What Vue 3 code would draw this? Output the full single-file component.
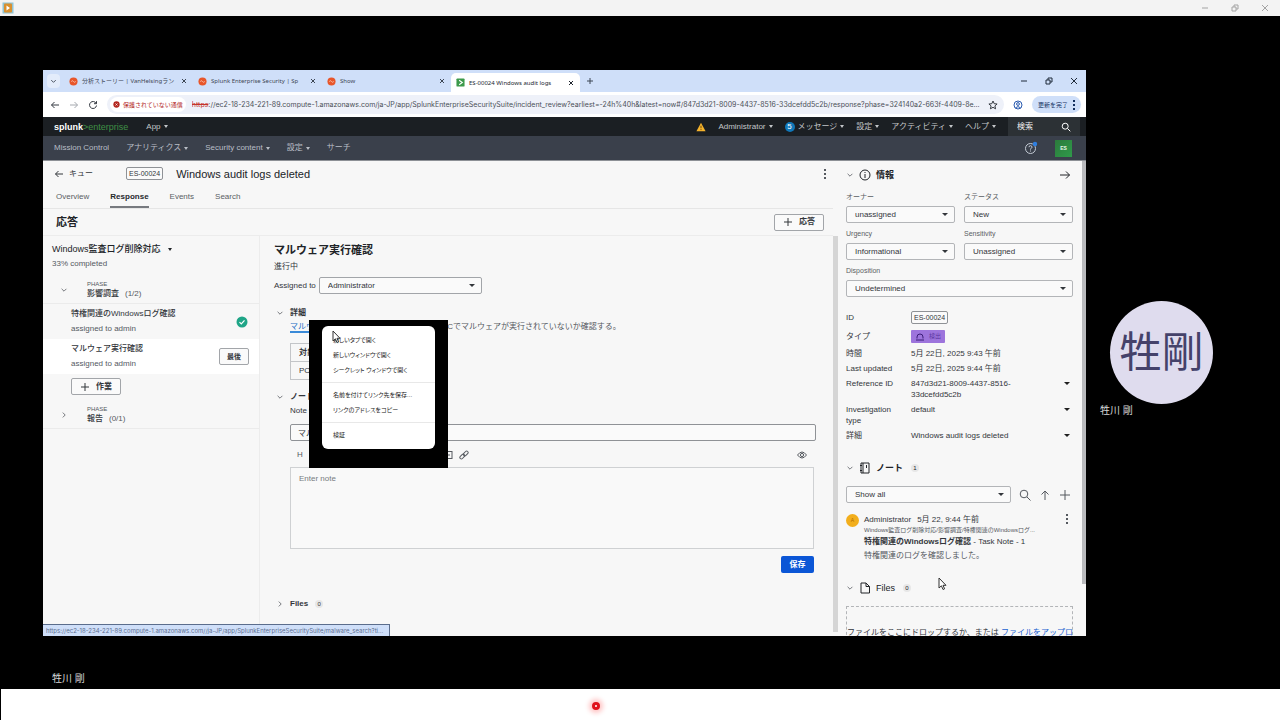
<template>
  <div class="viewer">
    <header class="titlebar">
      <svg class="app-icon" viewBox="0 0 12 12" aria-hidden="true">
        <rect x="0.5" y="0.5" width="11" height="11" fill="#8fc4d6" />
        <rect x="2" y="1.5" width="8" height="9" rx="1" fill="#d9902f" />
        <path d="M4.5 3.5v5l3.5-2.5z" fill="#fff" />
      </svg>
      <div class="window-buttons pale">
        <button type="button" aria-label="最小化">
          <svg viewBox="0 0 10 10"><path d="M2 5h6" /></svg>
        </button>
        <button type="button" aria-label="元に戻す">
          <svg viewBox="0 0 10 10"><path d="M2 4h4v4H2zM4 4V2h4v4H6" /></svg>
        </button>
        <button type="button" aria-label="閉じる">
          <svg viewBox="0 0 10 10"><path d="M2 2l6 6M8 2l-6 6" /></svg>
        </button>
      </div>
    </header>

    <div class="stage">
      <div class="share">
        <div class="browser">
          <!-- タブ -->
          <div class="tabstrip">
            <button type="button" class="tab-search" aria-label="タブを検索">
              <svg class="stroke" viewBox="0 0 10 10"><path d="M2.5 4l2.5 2.5L7.5 4" /></svg>
            </button>
            <div v-for="tab in tabs" :key="tab.title" class="tab" :class="{ active: tab.active }">
              <svg class="favicon" viewBox="0 0 10 10" aria-hidden="true">
                <template v-if="tab.active">
                  <rect x="0.5" y="0.5" width="9" height="9" rx="1" fill="#3c9a4b" />
                  <path d="M3.5 2.5L7 5 3.5 7.5" fill="none" stroke="#fff" stroke-width="1.2" />
                </template>
                <template v-else>
                  <circle cx="5" cy="5" r="4.5" fill="#e8562a" />
                  <path d="M2.5 5q1.2-1.8 2.5 0t2.5 0" fill="none" stroke="#f7c3ae" />
                </template>
              </svg>
              <span class="tab-title">{{ tab.title }}</span>
              <button type="button" class="tab-close" aria-label="タブを閉じる">
                <svg class="stroke" viewBox="0 0 10 10"><path d="M3 3l4 4M7 3L3 7" /></svg>
              </button>
            </div>
            <button type="button" class="new-tab" aria-label="新しいタブ">
              <svg class="stroke" viewBox="0 0 10 10"><path d="M5 2v6M2 5h6" /></svg>
            </button>
            <div class="window-buttons">
              <button type="button" aria-label="最小化">
                <svg viewBox="0 0 10 10"><path d="M2 5h6" /></svg>
              </button>
              <button type="button" aria-label="元に戻す">
                <svg viewBox="0 0 10 10"><path d="M2 4h4v4H2zM4 4V2h4v4H6" /></svg>
              </button>
              <button type="button" aria-label="閉じる">
                <svg viewBox="0 0 10 10"><path d="M2 2l6 6M8 2l-6 6" /></svg>
              </button>
            </div>
          </div>

          <!-- アドレスバー -->
          <div class="toolbar">
            <button type="button" aria-label="戻る">
              <svg class="stroke" viewBox="0 0 10 10"><path d="M9 5H1.5M4.5 2L1.5 5l3 3" /></svg>
            </button>
            <button type="button" class="dim" aria-label="進む">
              <svg class="stroke" viewBox="0 0 10 10"><path d="M1 5h7.5M5.5 2l3 3-3 3" /></svg>
            </button>
            <button type="button" aria-label="再読み込み">
              <svg class="stroke" viewBox="0 0 10 10"><path d="M8.2 3.5A3.5 3.5 0 1 0 8.5 5.5M8.5 1.2v2.5H6" /></svg>
            </button>
            <div class="omnibox">
              <span class="insecure">
                <svg viewBox="0 0 10 10" aria-hidden="true">
                  <circle cx="5" cy="5" r="4.5" fill="#b3261e" />
                  <path d="M3.5 3.5l3 3M6.5 3.5l-3 3" stroke="#fff" />
                </svg>
                保護されていない通信
              </span>
              <span class="url"><s>https</s>{{ pageUrl }}</span>
              <svg class="stroke star" viewBox="0 0 10 10" aria-hidden="true">
                <path d="M5 1l1.2 2.7 2.9.3-2.2 1.9.7 2.9L5 7.3 2.4 8.8l.7-2.9L.9 4l2.9-.3z" />
              </svg>
            </div>
            <svg class="stroke profile" viewBox="0 0 10 10" aria-hidden="true">
              <circle cx="5" cy="5" r="4" />
              <circle cx="5" cy="4" r="1.4" />
              <path d="M2.5 7.8q2.5-2.4 5 0" />
            </svg>
            <button type="button" class="update">
              更新を完了
              <span class="kebab"></span>
            </button>
          </div>

          <!-- Splunk バー -->
          <nav class="splunk-bar" aria-label="Splunk">
            <a class="brand" href="#"><b>splunk</b><span>&gt;enterprise</span></a>
            <a class="menu" href="#">App<i class="caret"></i></a>
            <span class="spacer"></span>
            <svg class="warn" viewBox="0 0 12 12" aria-hidden="true">
              <path d="M6 1l5.5 10H.5z" fill="#f5b32c" />
              <path d="M6 4.5v3M6 8.5v1.2" stroke="#5a3a00" />
            </svg>
            <a class="menu" href="#">Administrator<i class="caret"></i></a>
            <a class="menu" href="#"><em>5</em>メッセージ<i class="caret"></i></a>
            <a class="menu" href="#">設定<i class="caret"></i></a>
            <a class="menu" href="#">アクティビティ<i class="caret"></i></a>
            <a class="menu" href="#">ヘルプ<i class="caret"></i></a>
            <label class="find">
              <input type="text" placeholder="検索" aria-label="検索" />
              <svg class="stroke" viewBox="0 0 10 10"><circle cx="4.2" cy="4.2" r="3" /><path d="M6.5 6.5L9.3 9.3" /></svg>
            </label>
          </nav>

          <nav class="app-nav" aria-label="アプリ">
            <a v-for="item in appMenu" :key="item.label" class="menu" href="#">
              {{ item.label }}<i v-if="item.caret" class="caret"></i>
            </a>
            <span class="spacer"></span>
            <svg class="help" viewBox="0 0 14 14" aria-hidden="true">
              <circle cx="6.5" cy="7.5" r="5" fill="none" stroke="#c5ccd6" />
              <path d="M5 6.2q0-1.5 1.5-1.5T8 6.2q0 1-1.5 1.6v.8M6.5 9.5v1" fill="none" stroke="#c5ccd6" />
              <circle cx="11" cy="3" r="2.2" fill="#2f7fe0" />
            </svg>
            <span class="es-logo">ES</span>
          </nav>

          <div class="page">
            <main class="main">
              <div class="incident-head">
                <a class="back" href="#">
                  <svg class="stroke" viewBox="0 0 10 10"><path d="M9 5H1.5M4.5 2L1.5 5l3 3" /></svg>
                  キュー
                </a>
                <span class="chip">ES-00024</span>
                <h1>Windows audit logs deleted</h1>
                <button type="button" class="plain" aria-label="メニュー"><span class="kebab"></span></button>
              </div>
              <div class="page-tabs" role="tablist">
                <button
                  v-for="name in pageTabs"
                  :key="name"
                  type="button"
                  role="tab"
                  :aria-selected="name === currentTab"
                  :class="{ on: name === currentTab }"
                  @click="currentTab = name"
                >
                  {{ name }}
                </button>
              </div>
              <div class="response-head">
                <h2>応答</h2>
                <button type="button" class="btn">
                  <svg class="stroke" viewBox="0 0 10 10"><path d="M5 1v8M1 5h8" /></svg>応答
                </button>
              </div>

              <div class="columns">
                <section class="plan">
                  <h3>Windows監査ログ削除対応<i class="caret"></i></h3>
                  <p class="progress">33% completed</p>

                  <div class="phase">
                    <svg class="stroke chev" viewBox="0 0 10 10"><path d="M2 3.5l3 3 3-3" /></svg>
                    <div>
                      <small>PHASE</small>
                      <p><b>影響調査</b>(1/2)</p>
                    </div>
                  </div>
                  <div class="task">
                    <div>
                      <b>特権関連のWindowsログ確認</b>
                      <p>assigned to admin</p>
                    </div>
                    <svg class="done" viewBox="0 0 12 12" aria-label="完了">
                      <circle cx="6" cy="6" r="5.5" fill="#1fa587" />
                      <path d="M3.5 6.2l1.8 1.8 3.2-3.6" fill="none" stroke="#fff" stroke-width="1.2" />
                    </svg>
                  </div>
                  <div class="task current">
                    <div>
                      <b>マルウェア実行確認</b>
                      <p>assigned to admin</p>
                    </div>
                    <button type="button" class="btn small">最後</button>
                  </div>
                  <button type="button" class="btn add-task">
                    <svg class="stroke" viewBox="0 0 10 10"><path d="M5 1v8M1 5h8" /></svg>作業
                  </button>
                  <div class="phase">
                    <svg class="stroke chev" viewBox="0 0 10 10"><path d="M3.5 2l3 3-3 3" /></svg>
                    <div>
                      <small>PHASE</small>
                      <p><b>報告</b>(0/1)</p>
                    </div>
                  </div>
                </section>

                <section class="detail">
                  <h3>マルウェア実行確認</h3>
                  <p class="state">進行中</p>
                  <div class="assign">
                    <label for="assignee">Assigned to</label>
                    <span class="select">
                      <select id="assignee"><option>Administrator</option></select>
                      <i class="caret"></i>
                    </span>
                  </div>

                  <h4 class="first">
                    <svg class="stroke chev" viewBox="0 0 10 10"><path d="M2 3.5l3 3 3-3" /></svg>詳細
                  </h4>
                  <div class="body">
                    <p class="desc"><a href="#">マルウェア実行確認</a>のリンクから、対象のPCでマルウェアが実行されていないか確認する。</p>
                    <table>
                      <thead><tr><th>対象</th></tr></thead>
                      <tbody><tr><td>PC-01</td></tr></tbody>
                    </table>
                  </div>

                  <h4>
                    <svg class="stroke chev" viewBox="0 0 10 10"><path d="M2 3.5l3 3 3-3" /></svg>ノート
                  </h4>
                  <div class="body">
                    <label class="note-label" for="note-title">Note title</label>
                    <input id="note-title" class="note-title" type="text" value="マルウェア実行確認" />
                    <div class="format">
                      <button type="button" class="plain">H</button>
                      <button type="button" class="plain"><b>B</b></button>
                      <button type="button" class="plain"><i>I</i></button>
                      <span class="fill"></span>
                      <button type="button" class="plain" aria-label="画像">
                        <svg class="stroke" viewBox="0 0 10 10"><rect x="1" y="1.5" width="8" height="7" /><path d="M3 5h4" /></svg>
                      </button>
                      <button type="button" class="plain" aria-label="リンク">
                        <svg class="stroke" viewBox="0 0 10 10">
                          <rect x="4" y="2" width="5.5" height="3" rx="1.5" transform="rotate(-45 6.7 3.5)" />
                          <rect x="0.5" y="5" width="5.5" height="3" rx="1.5" transform="rotate(-45 3.3 6.5)" />
                        </svg>
                      </button>
                      <span class="spacer"></span>
                      <button type="button" class="plain" aria-label="プレビュー">
                        <svg class="stroke" viewBox="0 0 10 10"><path d="M.5 5q4.5-6 9 0-4.5 6-9 0z" /><circle cx="5" cy="5" r="1.6" /></svg>
                      </button>
                    </div>
                    <textarea placeholder="Enter note" aria-label="Note"></textarea>
                    <div class="actions"><button type="button" class="save">保存</button></div>
                  </div>

                  <h4 class="files">
                    <svg class="stroke chev" viewBox="0 0 10 10"><path d="M3.5 2l3 3-3 3" /></svg>Files
                    <span class="count">0</span>
                  </h4>

                  <!-- リンクの右クリックメニュー -->
                  <div class="context-layer">
                    <ul class="context-menu" role="menu">
                      <li v-for="(group, i) in contextMenu" :key="i">
                        <button v-for="label in group" :key="label" type="button" role="menuitem">{{ label }}</button>
                      </li>
                    </ul>
                    <svg class="pointer" viewBox="0 0 9 14" aria-hidden="true">
                      <path d="M1 1v10l2.4-2.2L5 12.5l1.6-.7L5 8.3h3z" />
                    </svg>
                  </div>
                </section>
              </div>
            </main>
            <div class="scroll-main"></div>

            <aside class="side">
              <h3 class="info-head">
                <svg class="stroke chev" viewBox="0 0 10 10"><path d="M2 3.5l3 3 3-3" /></svg>
                <svg class="stroke head-icon" viewBox="0 0 12 12"><circle cx="6" cy="6" r="5" /><path d="M6 5v4M6 3v1" /></svg>
                情報
                <span class="spacer"></span>
                <svg class="stroke head-icon" viewBox="0 0 12 12"><path d="M1 6h9.5M7 2.5L10.5 6 7 9.5" /></svg>
              </h3>

              <div class="fields">
                <div v-for="field in fields" :key="field.id" class="field" :class="{ wide: field.wide }">
                  <label :for="field.id">{{ field.label }}</label>
                  <span class="select">
                    <select :id="field.id"><option>{{ field.value }}</option></select>
                    <i class="caret"></i>
                  </span>
                </div>
              </div>

              <dl class="facts">
                <dt class="tall">ID</dt>
                <dd class="tall"><span class="chip">ES-00024</span></dd>
                <dt class="tall">タイプ</dt>
                <dd class="tall">
                  <span class="type-chip">
                    <svg viewBox="0 0 10 10" aria-hidden="true"><path d="M2 6.5V5a3 3 0 0 1 6 0v1.5M1 8h8" /></svg>検出
                  </span>
                </dd>
                <template v-for="fact in facts" :key="fact.label">
                  <dt>{{ fact.label }}</dt>
                  <dd>
                    <span>{{ fact.value }}</span>
                    <i v-if="fact.caret" class="caret"></i>
                  </dd>
                </template>
              </dl>

              <h3 class="notes-head">
                <svg class="stroke chev" viewBox="0 0 10 10"><path d="M2 3.5l3 3 3-3" /></svg>
                <svg class="stroke head-icon" viewBox="0 0 12 12"><path d="M2 1h8v10H2zM4 1v10M7.5 3v3M1 3.5h2M1 8.5h2" /></svg>
                ノート
                <span class="count">1</span>
              </h3>
              <div class="note-filter">
                <span class="select">
                  <select aria-label="ノートの表示"><option>Show all</option></select>
                  <i class="caret"></i>
                </span>
                <button type="button" class="plain" aria-label="検索">
                  <svg class="stroke" viewBox="0 0 12 12"><circle cx="5" cy="5" r="3.8" /><path d="M8 8l3.5 3.5" /></svg>
                </button>
                <button type="button" class="plain" aria-label="並べ替え">
                  <svg class="stroke" viewBox="0 0 12 12"><path d="M6 11V2M2.5 5.5L6 2l3.5 3.5" /></svg>
                </button>
                <button type="button" class="plain" aria-label="追加">
                  <svg class="stroke" viewBox="0 0 12 12"><path d="M6 1v10M1 6h10" /></svg>
                </button>
              </div>
              <article class="note">
                <span class="avatar">A</span>
                <div class="note-text">
                  <p class="by"><span>Administrator</span><time>5月 22, 9:44 午前</time></p>
                  <p class="path">Windows監査ログ削除対応/影響調査/特権関連のWindowsログ...</p>
                  <p class="name"><b>特権関連のWindowsログ確認</b> - Task Note - 1</p>
                  <p class="memo">特権関連のログを確認しました。</p>
                </div>
                <button type="button" class="plain" aria-label="ノートのメニュー"><span class="kebab"></span></button>
              </article>

              <h3 class="files-head">
                <svg class="stroke chev" viewBox="0 0 10 10"><path d="M2 3.5l3 3 3-3" /></svg>
                <svg class="stroke head-icon" viewBox="0 0 12 12"><path d="M2 1h5l3.5 3.5V11H2zM7 1v3.5h3.5" /></svg>
                <span class="light">Files</span>
                <span class="count">0</span>
              </h3>
              <div class="dropzone">ファイルをここにドロップするか、または <a href="#">ファイルをアップロ</a></div>

              <svg class="pointer side-pointer" viewBox="0 0 9 14" aria-hidden="true">
                <path d="M1 1v10l2.4-2.2L5 12.5l1.6-.7L5 8.3h3z" />
              </svg>
            </aside>
            <div class="scroll-side"><span></span></div>
          </div>

          <div class="status-url">{{ linkUrl }}</div>
        </div>
        <p class="caption">牲川 剛</p>
      </div>

      <div class="participant">
        <div class="face">牲剛</div>
        <p>牲川 剛</p>
      </div>
    </div>

    <footer class="dock"><span class="rec"></span></footer>
  </div>
</template>

<script setup>
import { ref } from 'vue'

const tabs = [
  { title: '分析ストーリー | VanHelsingラン' },
  { title: 'Splunk Enterprise Security | Sp' },
  { title: 'Show' },
  { title: 'ES-00024 Windows audit logs', active: true }
]

const pageUrl =
  '://ec2-18-234-221-89.compute-1.amazonaws.com/ja-JP/app/SplunkEnterpriseSecuritySuite/incident_review?earliest=-24h%40h&latest=now#/847d3d21-8009-4437-8516-33dcefdd5c2b/response?phase=324140a2-663f-4409-8e...'
const linkUrl =
  'https://ec2-18-234-221-89.compute-1.amazonaws.com//ja-JP/app/SplunkEnterpriseSecuritySuite/malware_search?ti...'

const appMenu = [
  { label: 'Mission Control' },
  { label: 'アナリティクス', caret: true },
  { label: 'Security content', caret: true },
  { label: '設定', caret: true },
  { label: 'サーチ' }
]

const pageTabs = ['Overview', 'Response', 'Events', 'Search']
const currentTab = ref('Response')

const contextMenu = [
  ['新しいタブで開く', '新しいウィンドウで開く', 'シークレット ウィンドウで開く'],
  ['名前を付けてリンク先を保存...', 'リンクのアドレスをコピー'],
  ['検証']
]

const fields = [
  { id: 'owner', label: 'オーナー', value: 'unassigned' },
  { id: 'status', label: 'ステータス', value: 'New' },
  { id: 'urgency', label: 'Urgency', value: 'Informational' },
  { id: 'sensitivity', label: 'Sensitivity', value: 'Unassigned' },
  { id: 'disposition', label: 'Disposition', value: 'Undetermined', wide: true }
]

const facts = [
  { label: '時間', value: '5月 22日, 2025 9:43 午前' },
  { label: 'Last updated', value: '5月 22日, 2025 9:44 午前' },
  { label: 'Reference ID', value: '847d3d21-8009-4437-8516-33dcefdd5c2b', caret: true },
  { label: 'Investigation type', value: 'default', caret: true },
  { label: '詳細', value: 'Windows audit logs deleted', caret: true }
]
</script>

<style>
body {
  margin: 0;
  background: #000;
}
</style>

<style scoped>
.viewer {
  height: 100vh;
  display: flex;
  flex-direction: column;
  font-family: "Liberation Sans", "Noto Sans CJK JP", sans-serif;
  font-size: 8px;
  line-height: 12px;
  color: #33363b;
}

.viewer * {
  box-sizing: border-box;
}

h1,
h2,
h3,
h4,
p,
ul,
dl,
dd {
  margin: 0;
  padding: 0;
}

a {
  color: inherit;
  text-decoration: none;
}

button,
input,
select,
textarea {
  font: inherit;
  color: inherit;
  margin: 0;
}

button {
  padding: 0;
  border: 0;
  background: none;
  cursor: pointer;
}

svg {
  display: block;
  flex: none;
  width: 10px;
  height: 10px;
}

.stroke {
  fill: none;
  stroke: currentColor;
  stroke-width: 1;
}

.spacer {
  flex: 1;
}

.caret {
  flex: none;
  width: 0;
  height: 0;
  border: 2px solid transparent;
  border-top: 3px solid currentColor;
  border-bottom: 0;
}

.kebab {
  display: block;
  width: 2px;
  height: 10px;
  background: repeating-linear-gradient(currentColor 0 2px, transparent 2px 4px);
}

.chev {
  width: 12px;
  height: 8px;
  color: #55595f;
}

/* 会議ウィンドウ */
.titlebar {
  flex: none;
  height: 16px;
  padding: 0 10px 0 2px;
  display: flex;
  align-items: center;
  justify-content: space-between;
  background: #f3f3f3;
}

.app-icon {
  width: 12px;
  height: 12px;
}

.window-buttons {
  display: flex;
  gap: 15px;
}

.window-buttons svg {
  fill: none;
  stroke: #1f2a3a;
}

.window-buttons.pale {
  gap: 20px;
}

.window-buttons.pale svg {
  stroke: #a3a3a3;
}

.stage {
  flex: 1;
  min-height: 0;
  display: grid;
  grid-template-columns: 1fr 194px;
  background: #000;
}

.share {
  min-width: 0;
  min-height: 0;
  padding: 54px 0 3px 43px;
  display: flex;
  flex-direction: column;
}

.caption {
  height: 50px;
  padding: 36px 0 0 9px;
  font-size: 10px;
  line-height: 14px;
  color: #d8d8d8;
}

.participant {
  padding: 14px 14px 0;
  display: flex;
  flex-direction: column;
  justify-content: center;
  font-size: 10px;
  line-height: 14px;
  color: #d8d8d8;
}

.face {
  width: 103px;
  height: 103px;
  margin-left: 10px;
  border-radius: 50%;
  display: flex;
  align-items: center;
  justify-content: center;
  background: #dfdcee;
  color: #45426a;
  font-size: 42px;
  font-weight: 400;
  line-height: 1;
}

.dock {
  flex: none;
  height: 31px;
  display: flex;
  align-items: center;
  justify-content: center;
  padding: 3px 90px 0 0;
  background: #fff;
  border-left: 1px solid #000;
}

.rec {
  width: 8px;
  height: 8px;
  border: 3px solid #e0121b;
  border-radius: 50%;
  background: #fff;
  box-shadow: 0 0 5px 3px #ffc4c4;
}

/* ブラウザ */
.browser {
  position: relative;
  flex: 1;
  min-height: 0;
  display: flex;
  flex-direction: column;
  overflow: hidden;
  background: #f7f7f7;
}

.tabstrip {
  flex: none;
  height: 22px;
  padding: 0 7px 0 4px;
  display: flex;
  align-items: center;
  background: #cfdff9;
  font-family: "Noto Sans", "Noto Sans CJK JP", sans-serif;
  font-size: 6px;
  color: #3d4654;
}

.tab-search {
  width: 13px;
  height: 14px;
  margin-right: 4px;
  padding: 2px;
  border-radius: 4px;
  background: #e3ecfb;
}

.tab-search svg {
  width: 9px;
}

.tab {
  width: 129px;
  height: 18px;
  padding: 0 4px 0 5px;
  display: flex;
  align-items: center;
  gap: 4px;
}

.tab.active {
  height: 19px;
  align-self: end;
  border-radius: 5px 5px 0 0;
  background: #fff;
  color: #20262f;
}

.favicon {
  width: 9px;
  height: 9px;
}

.tab-title {
  flex: 1;
  white-space: nowrap;
}

.new-tab {
  margin: 0 auto 0 5px;
}

.toolbar {
  flex: none;
  height: 25px;
  padding: 0 5px 0 7px;
  display: flex;
  align-items: center;
  gap: 9px;
  background: #fff;
  font-family: Inter, "Noto Sans CJK JP", sans-serif;
  color: #353a42;
}

.dim {
  color: #a5a9af;
}

.omnibox {
  flex: 1;
  min-width: 0;
  height: 19px;
  padding: 0 6px 0 3px;
  display: flex;
  align-items: center;
  gap: 6px;
  border-radius: 10px;
  background: #eef1f9;
}

.insecure {
  height: 15px;
  padding: 0 3px;
  display: flex;
  align-items: center;
  gap: 3px;
  border-radius: 8px;
  background: #fff;
  color: #b3261e;
  font-size: 6px;
  white-space: nowrap;
}

.insecure svg {
  width: 7px;
  height: 7px;
}

.url {
  flex: 1;
  overflow: hidden;
  white-space: nowrap;
  font-size: 7px;
  color: #4a4f57;
}

.url s {
  color: #c5352b;
}

.profile {
  color: #2a5bb0;
}

.update {
  height: 17px;
  padding: 0 6px;
  display: flex;
  align-items: center;
  gap: 5px;
  border-radius: 9px;
  background: #cfdff9;
  color: #14305f;
  font-size: 6px;
}

/* ナビゲーション */
.splunk-bar,
.app-nav {
  flex: none;
  display: flex;
  align-items: center;
  white-space: nowrap;
}

.splunk-bar {
  height: 19px;
  padding: 0 6px 0 11px;
  gap: 12px;
  background: #1b1f23;
  color: #c3c6c9;
}

.brand {
  margin-right: 6px;
  font-size: 9px;
}

.brand b {
  color: #fff;
}

.brand span {
  color: #3f8f45;
}

.menu {
  display: flex;
  align-items: center;
  gap: 3px;
}

.menu em {
  width: 10px;
  height: 10px;
  border-radius: 50%;
  background: #1077b8;
  color: #fff;
  font-style: normal;
  line-height: 10px;
  text-align: center;
}

.find {
  align-self: stretch;
  width: 72px;
  padding: 0 9px;
  display: flex;
  align-items: center;
  background: #2c3135;
  color: #fff;
}

.find input {
  flex: 1;
  min-width: 0;
  padding: 0;
  border: 0;
  outline: 0;
  background: none;
}

.find input::placeholder {
  color: #f0f0f0;
  opacity: 1;
}

.app-nav {
  height: 24px;
  padding: 0 14px 0 11px;
  gap: 17px;
  background: #3a404b;
  color: #b9bec6;
}

.help {
  width: 14px;
  height: 14px;
}

.es-logo {
  width: 17px;
  height: 17px;
  background: linear-gradient(135deg, #2c7a3c, #2f9a4a);
  color: #e6f5e8;
  font-size: 5px;
  font-weight: bold;
  line-height: 17px;
  text-align: center;
}

/* ページ */
.page {
  flex: 1;
  min-height: 0;
  display: flex;
  border-top: 1px solid #8d9096;
}

.main {
  flex: 1;
  min-width: 0;
  display: flex;
  flex-direction: column;
}

.incident-head {
  height: 25px;
  padding: 0 2px 0 11px;
  display: flex;
  align-items: center;
}

.back {
  width: 72px;
  display: flex;
  align-items: center;
  gap: 5px;
}

.chip {
  height: 13px;
  padding: 0 2px;
  border: 1px solid #8f9296;
  border-radius: 2px;
  background: #fafafa;
  font-size: 7px;
  line-height: 11px;
}

h1 {
  flex: 1;
  margin-left: 13px;
  font-size: 11px;
  font-weight: normal;
  line-height: 16px;
  color: #202327;
}

.plain {
  display: flex;
  align-items: center;
  justify-content: center;
  width: 12px;
  color: #55595f;
}

.page-tabs {
  height: 23px;
  padding-left: 13px;
  display: flex;
  gap: 21px;
  border-bottom: 1px solid #e6e6e6;
}

.page-tabs button {
  padding-top: 2px;
  border-bottom: 2px solid transparent;
  color: #5a5e64;
}

.page-tabs .on {
  border-bottom-color: #777a7f;
  color: #26292d;
  font-weight: bold;
}

.response-head {
  height: 27px;
  padding: 0 9px 0 13px;
  display: flex;
  align-items: center;
  justify-content: space-between;
  border-bottom: 1px solid #ececec;
}

h2 {
  font-size: 11px;
  line-height: 16px;
  color: #202327;
}

.btn {
  height: 17px;
  padding: 0 8px;
  display: flex;
  align-items: center;
  justify-content: center;
  gap: 6px;
  border: 1px solid #a2a5a9;
  border-radius: 2px;
  background: #fafafa;
  font-weight: bold;
}

.btn.small {
  padding: 0 7px;
  font-size: 7px;
}

.columns {
  flex: 1;
  min-height: 0;
  display: grid;
  grid-template-columns: 217px 1fr;
}

.plan {
  border-right: 1px solid #ececec;
}

.plan h3 {
  padding: 6px 0 0 9px;
  display: flex;
  align-items: center;
  gap: 7px;
  font-size: 9px;
  font-weight: 500;
  line-height: 14px;
  color: #202327;
}

.progress {
  padding: 2px 0 0 9px;
  color: #55595f;
}

.phase {
  padding: 10px 0 3px 15px;
  display: flex;
  align-items: center;
  gap: 17px;
  border-bottom: 1px solid #ebebeb;
  color: #55595f;
}

.phase small {
  display: block;
  font-size: 6px;
  line-height: 8px;
}

.phase b {
  margin-right: 6px;
  font-weight: 500;
  color: #33363b;
}

.task {
  padding: 4px 10px 4px 28px;
  display: flex;
  align-items: center;
  justify-content: space-between;
}

.task b {
  font-weight: 500;
}

.task p {
  padding-top: 3px;
  color: #55595f;
}

.task.current {
  background: #fff;
}

.done {
  width: 12px;
  height: 12px;
  margin-right: 1px;
}

.add-task {
  margin: 4px 0 0 28px;
}

.detail {
  position: relative;
  min-width: 0;
  padding: 6px 17px 0 14px;
}

.detail h3 {
  font-size: 11px;
  line-height: 16px;
  color: #202327;
}

.state {
  margin-top: 3px;
}

.assign {
  margin-top: 4px;
  display: flex;
  align-items: center;
  gap: 3px;
}

.assign .select {
  width: 163px;
}

.select {
  display: grid;
  align-items: center;
}

.select select,
.select .caret {
  grid-area: 1 / 1;
}

.select select {
  width: 100%;
  height: 17px;
  padding: 0 8px;
  border: 1px solid #a2a5a9;
  border-radius: 2px;
  background: #fafafa;
  appearance: none;
}

.select .caret {
  margin-right: 7px;
  justify-self: end;
  border-width: 3px 3px 0;
  pointer-events: none;
}

h4 {
  margin-top: 11px;
  display: flex;
  align-items: center;
  gap: 4px;
  font-size: 8px;
  line-height: 12px;
}

h4.first {
  margin-top: 13px;
}

h4.files {
  margin-top: 25px;
}

.body {
  padding: 2px 0 0 16px;
}

.desc {
  white-space: nowrap;
  color: #55595f;
}

.desc a {
  color: #1a6fc4;
  border-bottom: 2px solid #3a8ad8;
}

table {
  width: 120px;
  margin-top: 10px;
  border-collapse: collapse;
}

th,
td {
  height: 18px;
  padding: 0 8px;
  border: 1px solid #c3c5c8;
  text-align: left;
}

.note-label {
  display: block;
}

.note-title {
  display: block;
  width: 100%;
  height: 17px;
  margin-top: 7px;
  padding: 0 7px;
  border: 1px solid #8f9296;
  border-radius: 2px;
  background: #fafafa;
}

.format {
  height: 26px;
  padding: 2px 8px 0 4px;
  display: flex;
  align-items: center;
  gap: 4px;
}

.fill {
  width: 96px;
}

textarea {
  display: block;
  width: calc(100% - 2px);
  height: 82px;
  padding: 5px 8px;
  border: 1px solid #cfd1d3;
  background: #f9f9f9;
  resize: none;
}

textarea::placeholder {
  color: #777b80;
  opacity: 1;
}

.actions {
  padding: 7px 2px 0 0;
  display: flex;
  justify-content: end;
}

.save {
  width: 33px;
  height: 17px;
  border-radius: 2px;
  background: #0b56d6;
  color: #fff;
  font-weight: bold;
}

.count {
  min-width: 8px;
  height: 8px;
  margin-left: 3px;
  border-radius: 4px;
  background: #e7e7e7;
  font-size: 6px;
  font-weight: normal;
  line-height: 8px;
  text-align: center;
}

.context-layer {
  position: absolute;
  top: 84px;
  left: 49px;
  width: 139px;
  padding: 6px 13px 19px;
  background: #000;
}

.context-menu {
  list-style: none;
  padding: 7px 0 6px;
  border-radius: 6px;
  background: #fff;
}

.context-menu li {
  padding-bottom: 4px;
}

.context-menu li + li {
  padding-top: 5px;
  border-top: 1px solid #e8e8e8;
}

.context-menu li:last-child {
  padding-bottom: 0;
}

.context-menu button {
  display: block;
  width: 100%;
  padding: 0 11px;
  font-size: 6px;
  line-height: 15px;
  font-feature-settings: "palt";
  text-align: left;
  white-space: nowrap;
  color: #202020;
}

.pointer {
  position: absolute;
  top: 10px;
  left: 23px;
  width: 9px;
  height: 14px;
  fill: #fff;
  stroke: #333;
}

.scroll-main {
  flex: none;
  width: 5px;
  margin: 75px 0 4px;
  background: #d5d5d5;
}

/* サイドパネル */
.side {
  position: relative;
  flex: none;
  width: 235px;
  padding: 6px 0 0 8px;
  overflow: hidden;
}

.side h3 {
  padding-right: 2px;
  display: flex;
  align-items: center;
  gap: 5px;
  font-size: 9px;
  line-height: 16px;
  color: #202327;
}

.side h3 .chev {
  width: 8px;
}

.side .head-icon {
  width: 12px;
  height: 12px;
}

.side .light {
  font-weight: normal;
}

.side .select select {
  border-color: #b3b5b8;
}

.fields {
  margin-top: 9px;
  display: grid;
  grid-template-columns: 1fr 1fr;
  gap: 6px 9px;
}

.field {
  display: grid;
  gap: 4px;
}

.field label {
  font-size: 7px;
  line-height: 10px;
  color: #5a5e64;
}

.wide {
  grid-column: 1 / -1;
}

.facts {
  margin-top: 13px;
  display: grid;
  grid-template-columns: 57px 1fr;
  gap: 4px 8px;
  line-height: 11px;
}

.facts dd {
  display: flex;
  align-items: start;
  justify-content: space-between;
  gap: 40px;
}

.facts .caret {
  margin: 4px 3px 0 0;
  border-width: 3px 3px 0;
  color: #202020;
}

.facts .tall {
  height: 15px;
  display: flex;
  align-items: center;
}

.type-chip {
  width: 34px;
  height: 13px;
  display: flex;
  align-items: center;
  justify-content: center;
  gap: 4px;
  border-radius: 1px;
  background: #9d74dc;
  color: #5a34a0;
  font-size: 6px;
}

.type-chip svg {
  fill: none;
  stroke: #3b1d78;
}

.notes-head {
  margin-top: 19px;
}

.note-filter {
  margin-top: 10px;
  padding-right: 2px;
  display: flex;
  align-items: center;
  gap: 8px;
}

.note-filter .select {
  flex: 1;
}

.note-filter svg {
  width: 12px;
  height: 12px;
}

.note {
  margin-top: 11px;
  display: flex;
  align-items: start;
  gap: 5px;
  line-height: 11px;
}

.avatar {
  flex: none;
  width: 13px;
  height: 13px;
  border-radius: 50%;
  background: #f2ae1c;
  color: #b06a00;
  font-size: 5px;
  line-height: 13px;
  text-align: center;
}

.note-text {
  flex: 1;
  min-width: 0;
  white-space: nowrap;
}

.by span {
  margin-right: 6px;
}

.path {
  font-size: 6px;
  color: #55595f;
}

.memo {
  margin-top: 3px;
  color: #55595f;
}

.files-head {
  margin-top: 19px;
}

.dropzone {
  height: 60px;
  margin-top: 10px;
  padding-top: 20px;
  border: 1px dashed #b3b5b8;
  text-align: center;
  white-space: nowrap;
}

.dropzone a {
  color: #1a62d0;
}

.side-pointer {
  top: 416px;
  left: 100px;
}

.scroll-side {
  flex: none;
  width: 13px;
  padding-left: 9px;
}

.scroll-side span {
  display: block;
  height: 89%;
  background: #b9babd;
}

.status-url {
  position: absolute;
  left: 0;
  bottom: 0;
  width: 347px;
  height: 12px;
  padding: 0 3px;
  overflow: hidden;
  border: 1px solid #5b6d8c;
  border-left: 0;
  border-bottom: 0;
  background: #cfdff9;
  color: #5d6f92;
  font-family: Inter, sans-serif;
  font-size: 6px;
  line-height: 11px;
  white-space: nowrap;
}
</style>
